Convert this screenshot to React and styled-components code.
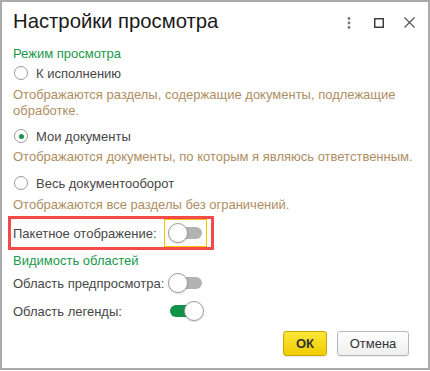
import styled, { createGlobalStyle } from "styled-components";

const GlobalStyle = createGlobalStyle`
  html, body {
    margin: 0;
    padding: 0;
    background: #fff;
  }
  body {
    font-family: Arial, "Liberation Sans", sans-serif;
    font-size: 13px;
    color: #474747;
  }
`;

const Window = styled.div`
  box-sizing: border-box;
  width: 430px;
  height: 370px;
  border: 2px solid #ababab;
  background: #fff;
  display: flex;
  flex-direction: column;
`;

const Header = styled.div`
  height: 43px;
  display: flex;
  align-items: center;
  padding: 0 8px 0 11px;
`;

const Title = styled.div`
  flex: 1;
  font-size: 20.3px;
  color: #1a1a1a;
  margin-top: -4px;
`;

const HeaderButton = styled.div`
  width: 22px;
  height: 22px;
  display: flex;
  align-items: center;
  justify-content: center;
  margin-top: -2px;
  margin-left: ${(p) => p.gap || 9}px;
`;

const Body = styled.div`
  flex: 1;
  display: flex;
  flex-direction: column;
  padding: 0 11px;
`;

const GroupTitle = styled.div`
  color: #17994b;
  line-height: ${(p) => p.lh || 18}px;
  margin-top: ${(p) => p.mt || 0}px;
`;

const RadioRow = styled.label`
  display: flex;
  align-items: center;
  height: 22px;
  margin-top: ${(p) => p.mt || 0}px;
  color: #474747;
`;

const RadioCircle = styled.span`
  box-sizing: border-box;
  width: 14px;
  height: 14px;
  border-radius: 50%;
  border: 1px solid #9a9a9a;
  background: #fff;
  margin: 0 8px 0 1px;
  display: flex;
  align-items: center;
  justify-content: center;

  &::after {
    content: "";
    width: 5px;
    height: 5px;
    border-radius: 50%;
    background: ${(p) => (p.checked ? "#109848" : "transparent")};
  }
`;

const Hint = styled.div`
  color: #ae8e62;
  line-height: 16px;
  white-space: nowrap;
  margin-top: ${(p) => p.mt || 0}px;
`;

const Highlight = styled.div`
  box-sizing: border-box;
  width: 206px;
  height: 34px;
  margin: 3px 0 0 -5px;
  border: 3px solid #f44a4a;
  display: flex;
  align-items: center;
  padding-left: 2px;
`;

const FieldRow = styled.div`
  display: flex;
  align-items: center;
  height: 22px;
  margin-top: ${(p) => p.mt || 0}px;
`;

const FieldLabel = styled.span`
  flex: none;
  width: 155px;
  white-space: nowrap;
  color: #474747;
`;

const Focus = styled.div`
  box-sizing: border-box;
  width: 43px;
  height: 28px;
  border: 1px solid #f2c300;
  padding: 3px;
  margin-left: -4px;
`;

const Toggle = styled.div`
  position: relative;
  width: 36px;
  height: 20px;

  &::before {
    content: "";
    position: absolute;
    left: 2px;
    right: 2px;
    top: 4px;
    height: 12px;
    border-radius: 6px;
    background: ${(p) => (p.on ? "#0f9348" : "#b3b3b3")};
  }
`;

const Knob = styled.span`
  position: absolute;
  top: 0;
  ${(p) => (p.on ? "right: 0;" : "left: 0;")}
  box-sizing: border-box;
  width: 20px;
  height: 20px;
  border-radius: 50%;
  background: #fff;
  border: 1px solid #9c9c9c;
  box-shadow: 0 1px 2px rgba(0, 0, 0, 0.15);
`;

const Footer = styled.div`
  display: flex;
  justify-content: flex-end;
  gap: 10px;
  padding: 9px 8px 0 0;
`;

const Button = styled.button`
  box-sizing: border-box;
  width: ${(p) => (p.primary ? 44 : 72)}px;
  height: 25px;
  padding: 0;
  border-radius: 3px;
  font-family: Arial, "Liberation Sans", sans-serif;
  font-size: 13px;
  color: #333;
  font-weight: ${(p) => (p.primary ? "bold" : "normal")};
  border: 1px solid ${(p) => (p.primary ? "#c6a800" : "#b8b8b8")};
  background: ${(p) =>
    p.primary
      ? "linear-gradient(#fbe63a, #f0cd00)"
      : "linear-gradient(#ffffff, #efefef)"};
  box-shadow: 0 1px 1px rgba(0, 0, 0, 0.08);
`;

const Switch = ({ on }) => (
  <Toggle on={on}>
    <Knob on={on} />
  </Toggle>
);

export default function App() {
  return (
    <>
      <GlobalStyle />
      <Window>
        <Header>
          <Title>Настройки просмотра</Title>
          <HeaderButton>
            <svg width="4" height="12" viewBox="0 0 4 12">
              <circle cx="2" cy="1.5" r="1.4" fill="#777" />
              <circle cx="2" cy="6" r="1.4" fill="#777" />
              <circle cx="2" cy="10.5" r="1.4" fill="#777" />
            </svg>
          </HeaderButton>
          <HeaderButton gap={8}>
            <svg width="10" height="10" viewBox="0 0 10 10">
              <rect x="0.75" y="0.75" width="8.5" height="8.5" fill="none" stroke="#333" strokeWidth="1.4" />
            </svg>
          </HeaderButton>
          <HeaderButton gap={8}>
            <svg width="11" height="11" viewBox="0 0 11 11">
              <path d="M0.5 0.5 L10.5 10.5 M10.5 0.5 L0.5 10.5" stroke="#555" strokeWidth="1.2" />
            </svg>
          </HeaderButton>
        </Header>
        <Body>
          <GroupTitle lh={17}>Режим просмотра</GroupTitle>
          <RadioRow mt={0}>
            <RadioCircle />К исполнению
          </RadioRow>
          <Hint mt={3}>
            Отображаются разделы, содержащие документы, подлежащие
            <br />
            обработке.
          </Hint>
          <RadioRow mt={6}>
            <RadioCircle checked />Мои документы
          </RadioRow>
          <Hint mt={2}>Отображаются документы, по которым я являюсь ответственным.</Hint>
          <RadioRow mt={7}>
            <RadioCircle />Весь документооборот
          </RadioRow>
          <Hint mt={3}>Отображаются все разделы без ограничений.</Hint>
          <Highlight>
            <FieldLabel>Пакетное отображение:</FieldLabel>
            <Focus>
              <Switch on={false} />
            </Focus>
          </Highlight>
          <GroupTitle mt={2}>Видимость областей</GroupTitle>
          <FieldRow mt={2}>
            <FieldLabel>Область предпросмотра:</FieldLabel>
            <Switch on={false} />
          </FieldRow>
          <FieldRow mt={6}>
            <FieldLabel>Область легенды:</FieldLabel>
            <Switch on />
          </FieldRow>
          <Footer>
            <Button primary>ОК</Button>
            <Button>Отмена</Button>
          </Footer>
        </Body>
      </Window>
    </>
  );
}
